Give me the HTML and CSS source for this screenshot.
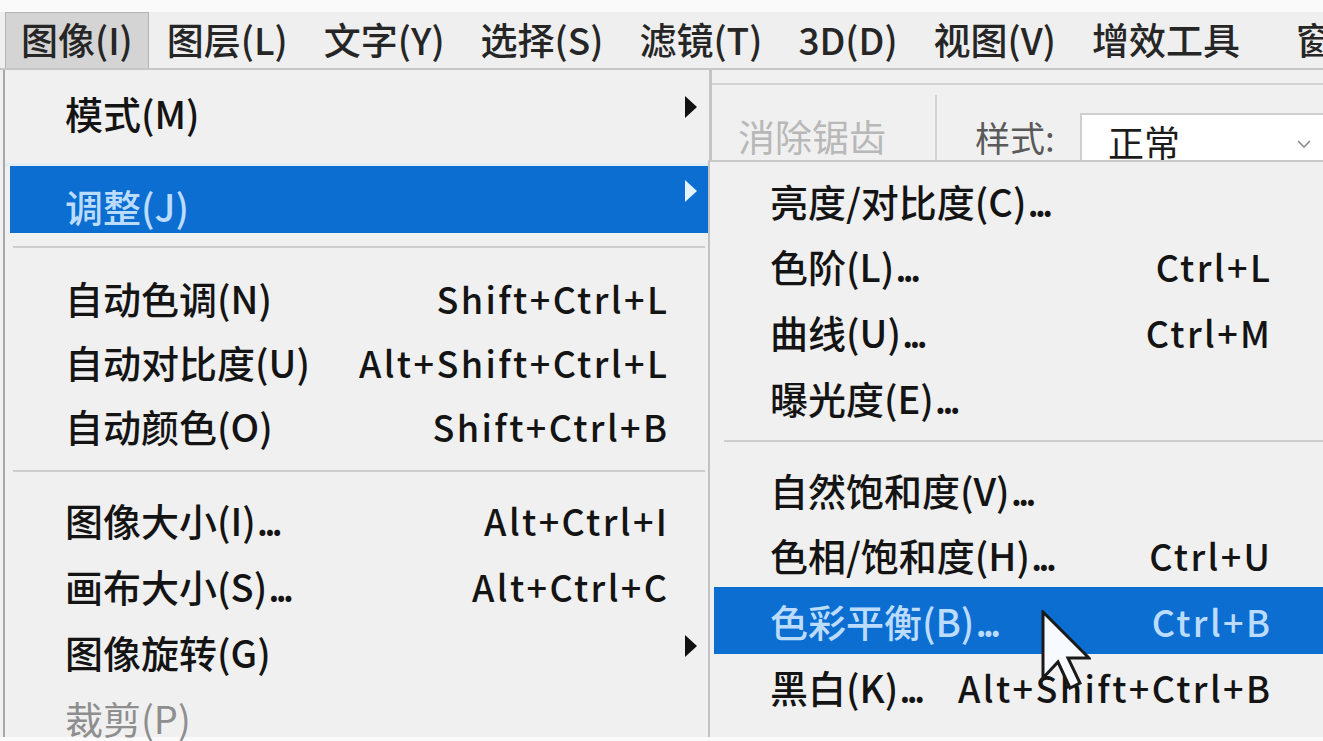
FILE: index.html
```html
<!DOCTYPE html>
<html lang="zh-CN">
<head>
<meta charset="utf-8">
<title>图像菜单</title>
<link rel="stylesheet" href="styles.css">
</head>
<body>
<div class="topstrip"></div>
<nav class="menubar">
  <span class="mb-item active">图像(I)</span>
  <span class="mb-item">图层(L)</span>
  <span class="mb-item">文字(Y)</span>
  <span class="mb-item">选择(S)</span>
  <span class="mb-item">滤镜(T)</span>
  <span class="mb-item">3D(D)</span>
  <span class="mb-item">视图(V)</span>
  <span class="mb-item">增效工具</span>
  <span class="mb-item last">窗口(W)</span>
</nav>
<div class="workspace">
  <div class="options-bar">
    <span class="opt-disabled">消除锯齿</span>
    <span class="opt-sep"></span>
    <span class="opt-label">样式:</span>
    <div class="opt-select">
      <span>正常</span>
      <svg class="chev" viewBox="0 0 14 8" width="14" height="8"><path d="M1 1 L7 7 L13 1" fill="none" stroke="#8a8a8a" stroke-width="1.6"/></svg>
    </div>
  </div>

  <div class="menu main-menu">
    <div class="mi"><span class="label">模式(M)</span><span class="sc"></span><span class="arr"><svg viewBox="0 0 12 22" width="12" height="22"><polygon points="0,0 12,11 0,22" fill="#111"/></svg></span></div>
    <div class="gap-top"></div>
    <div class="mi hl"><span class="label">调整(J)</span><span class="sc"></span><span class="arr"><svg viewBox="0 0 12 22" width="12" height="22"><polygon points="0,0 12,11 0,22" fill="#e4f1ff"/></svg></span></div>
    <div class="sep sep-a"></div>
    <div class="mi tight"><span class="label">自动色调(N)</span><span class="sc">Shift+Ctrl+L</span><span class="arr"></span></div>
    <div class="mi tight"><span class="label">自动对比度(U)</span><span class="sc">Alt+Shift+Ctrl+L</span><span class="arr"></span></div>
    <div class="mi tight"><span class="label">自动颜色(O)</span><span class="sc">Shift+Ctrl+B</span><span class="arr"></span></div>
    <div class="sep sep-b"></div>
    <div class="mi"><span class="label">图像大小(I)<span class="ell">...</span></span><span class="sc">Alt+Ctrl+I</span><span class="arr"></span></div>
    <div class="mi"><span class="label">画布大小(S)<span class="ell">...</span></span><span class="sc">Alt+Ctrl+C</span><span class="arr"></span></div>
    <div class="mi"><span class="label">图像旋转(G)</span><span class="sc"></span><span class="arr"><svg viewBox="0 0 12 22" width="12" height="22"><polygon points="0,0 12,11 0,22" fill="#111"/></svg></span></div>
    <div class="mi disabled"><span class="label">裁剪(P)</span><span class="sc"></span><span class="arr"></span></div>
  </div>

  <div class="menu sub-menu">
    <div class="si first"><span class="label">亮度/对比度(C)<span class="ell">...</span></span><span class="sc"></span></div>
    <div class="si"><span class="label">色阶(L)<span class="ell">...</span></span><span class="sc">Ctrl+L</span></div>
    <div class="si"><span class="label">曲线(U)<span class="ell">...</span></span><span class="sc">Ctrl+M</span></div>
    <div class="si"><span class="label">曝光度(E)<span class="ell">...</span></span><span class="sc"></span></div>
    <div class="sep sep-c"></div>
    <div class="si"><span class="label">自然饱和度(V)<span class="ell">...</span></span><span class="sc"></span></div>
    <div class="si short"><span class="label">色相/饱和度(H)<span class="ell">...</span></span><span class="sc">Ctrl+U</span></div>
    <div class="si hl"><span class="label">色彩平衡(B)<span class="ell">...</span></span><span class="sc">Ctrl+B</span></div>
    <div class="si"><span class="label">黑白(K)<span class="ell">...</span></span><span class="sc">Alt+Shift+Ctrl+B</span></div>
  </div>

  <svg class="cursor" viewBox="0 0 50 80" width="50" height="80">
    <path d="M2 2 L2 68 L17 52 L29 78 L39 73 L27 48 L48 48 Z" fill="#f7fbff" stroke="#1a1a1a" stroke-width="3" stroke-linejoin="miter"/>
  </svg>
</div>
</body>
</html>
```
FILE: styles.css
```css
* { box-sizing: border-box; }

html, body {
  margin: 0;
  padding: 0;
}

body {
  width: 1323px;
  height: 741px;
  overflow: hidden;
  background: #fafafa;
  font-family: "Noto Sans CJK SC", "Noto Sans", sans-serif;
  font-weight: 500;
  color: #141414;
}

.topstrip {
  height: 12px;
  background: #fafafa;
}

.menubar {
  height: 58px;
  background: #efefef;
  display: flex;
  align-items: stretch;
  padding-left: 5px;
  border-bottom: 2px solid #c6c6c6;
  font-size: 37px;
  line-height: 1;
  white-space: nowrap;
  overflow: hidden;
}

.mb-item {
  display: flex;
  align-items: center;
  padding: 0 18px 2px 18px;
  color: #262626;
  flex: none;
}

.mb-item.active {
  background: #d4d4d4;
  border: 1px solid #b4b4b4;
  border-bottom: none;
  padding-left: 15px;
  padding-right: 15px;
}

.mb-item.last {
  padding-left: 38px;
}

.workspace {
  position: relative;
  height: 667px;
  background: #f0f0f0;
}

/* options bar behind the menus */
.options-bar {
  margin-left: 710px;
  padding-top: 13px;
  height: 92px;
  display: flex;
  align-items: stretch;
  background: linear-gradient(#f0f0f0 0 13px, #d2d2d2 13px 15px, #f0f0f0 15px);
}

.options-bar > * { flex: none; }

.opt-disabled {
  font-size: 37px;
  line-height: 1;
  color: #b8b8b8;
  font-weight: 400;
  padding: 35px 0 0 28px;
  width: 225px;
}

.opt-sep {
  width: 2px;
  background: #d4d4d4;
  margin-top: 12px;
}

.opt-label {
  font-size: 35px;
  line-height: 1;
  color: #5a5a5a;
  font-weight: 400;
  padding: 36px 0 0 38px;
  width: 143px;
}

.opt-select {
  flex: 1;
  margin-top: 30px;
  background: #ffffff;
  border: 2px solid #cfcfcf;
  border-right: none;
  display: flex;
  align-items: center;
  justify-content: space-between;
  padding: 6px 12px 0 26px;
  font-size: 36px;
  font-weight: 400;
  line-height: 1;
  color: #1c1c1c;
}

.chev { margin-top: 6px; }

/* menus */
.menu {
  position: absolute;
  top: 0;
  background: #f0f0f0;
  font-size: 38px;
  line-height: 1;
  white-space: nowrap;
}

.sc {
  font-size: 36px;
  letter-spacing: 2.4px;
  margin-right: -2.4px;
}

.ell {
  letter-spacing: -4px;
  margin-left: 1px;
}

.main-menu {
  left: 3px;
  width: 709px;
  height: 667px;
  border-left: 2px solid #a9a9a9;
  border-right: 3px solid #c4c4c4;
  padding-top: 10px;
}

.mi {
  display: flex;
  align-items: center;
  height: 66px;
  padding-left: 60px;
}

.mi.tight { height: 64px; }

.mi .label { flex: 1; }

.mi .sc {
  text-align: right;
}

.mi .arr {
  width: 42px;
  padding-left: 18px;
  display: flex;
  align-self: flex-start;
  padding-top: 16px;
}

.mi.disabled { color: #8e8e8e; font-weight: 400; }

.mi.hl {
  height: 67px;
  margin-left: 5px;
  padding-left: 55px;
  padding-top: 12px;
  background: #0b6ed0;
  color: #bcdcff;
}

.mi.hl .arr { padding-top: 2px; }

.gap-top {
  height: 20px;
  border-bottom: 3px solid #e2ecf5;
}

.sep {
  position: relative;
}

.sep::after {
  content: "";
  position: absolute;
  left: 8px;
  right: 4px;
  height: 2px;
  background: #cdcdcd;
}

.sep-a { height: 33px; }
.sep-a::after { top: 13px; }

.sep-b { height: 29px; }
.sep-b::after { top: 12px; }

.sub-menu {
  left: 708px;
  top: 90px;
  width: 620px;
  height: 577px;
  border-left: 2px solid #c2c2c2;
  border-top: 2px solid #c9c9c9;
  padding-top: 7px;
}

.si {
  display: flex;
  align-items: center;
  height: 66px;
  padding-left: 60px;
  padding-right: 58px;
}

.si.first { height: 64px; }
.si.short { height: 64px; }

.si .label { flex: 1; }
.si .sc { text-align: right; }

.si.hl {
  height: 67px;
  margin-left: 4px;
  padding-left: 56px;
  background: #0b6ed0;
  color: #bcdcff;
}

.sep-c { height: 26px; }
.sep-c::after { top: 9px; left: 14px; right: 0; }

.cursor {
  position: absolute;
  left: 1041px;
  top: 540px;
}
```
